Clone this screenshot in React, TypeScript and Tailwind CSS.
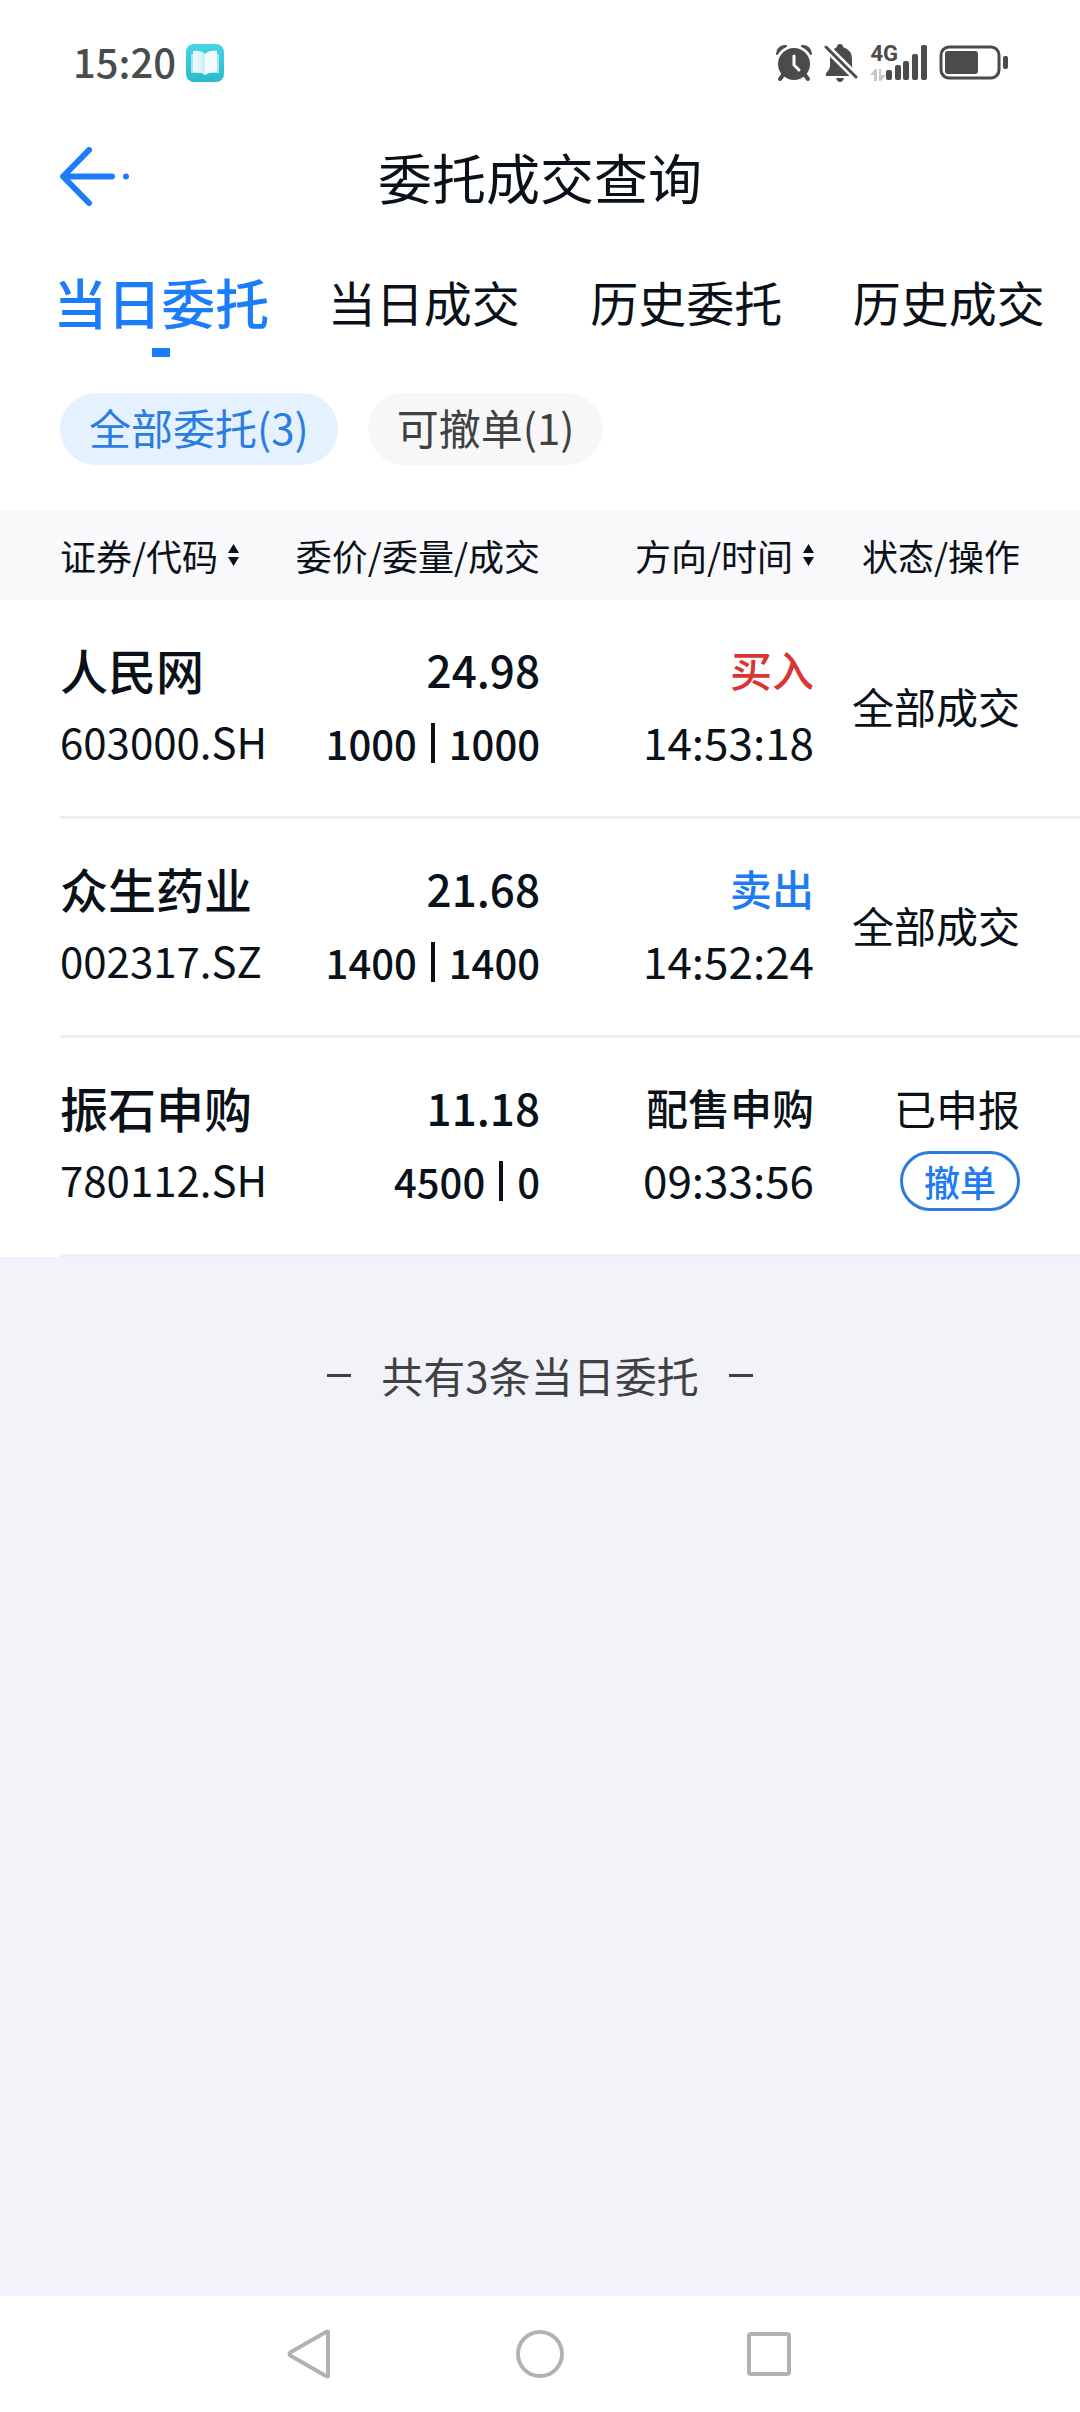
import React, { useState } from "react";

type Order = {
  name: string;
  code: string;
  price: string;
  amount: string;
  filled: string;
  side: string;
  sideClass: string;
  time: string;
  status: string;
  cancellable: boolean;
};

const orders: Order[] = [
  { name: "人民网", code: "603000.SH", price: "24.98", amount: "1000", filled: "1000", side: "买入", sideClass: "text-[#d93532]", time: "14:53:18", status: "全部成交", cancellable: false },
  { name: "众生药业", code: "002317.SZ", price: "21.68", amount: "1400", filled: "1400", side: "卖出", sideClass: "text-[#1f7cf0]", time: "14:52:24", status: "全部成交", cancellable: false },
  { name: "振石申购", code: "780112.SH", price: "11.18", amount: "4500", filled: "0", side: "配售申购", sideClass: "text-[#0a1118]", time: "09:33:56", status: "已申报", cancellable: true },
];

const tabs = ["当日委托", "当日成交", "历史委托", "历史成交"];
const filters = ["全部委托(3)", "可撤单(1)"];

function StatusBar() {
  return (
    <div className="flex h-[126px] items-center justify-between pl-[73px] pr-[72px] text-[#4b4b4b]">
      <div className="flex items-center gap-[10px]">
        <span className="pb-1 text-[40px] leading-[48px] font-medium">15:20</span>
        <svg width="38" height="38" viewBox="0 0 38 38" aria-hidden="true">
          <defs>
            <linearGradient id="tile" x1="0" y1="0" x2="0" y2="1">
              <stop offset="0" stopColor="#45d6e6" />
              <stop offset="1" stopColor="#2bb9cc" />
            </linearGradient>
            <linearGradient id="page" x1="0" y1="0" x2="1" y2="0">
              <stop offset="0" stopColor="#f4fdff" />
              <stop offset="1" stopColor="#c9edf7" />
            </linearGradient>
          </defs>
          <rect width="38" height="38" rx="8" fill="url(#tile)" />
          <path d="M5 10h28v19H21l-2 2-2-2H5z" fill="#a5e6f0" />
          <path d="M7 7q8-1 12 3v21q-4-3-12-3z" fill="url(#page)" />
          <path d="M31 7q-8-1-12 3v21q4-3 12-3z" fill="#f4fcff" />
        </svg>
      </div>
      <div className="flex items-center gap-3">
        <svg width="36" height="38" viewBox="0 0 36 38" aria-hidden="true" fill="currentColor">
          <path d="M1 10A8 8 0 0 1 10 2Q4 5 1 10zM35 10A8 8 0 0 0 26 2Q32 5 35 10z" stroke="currentColor" strokeWidth="2" strokeLinejoin="round" />
          <circle cx="18" cy="20" r="16" />
          <path d="M7 31l-3 4M29 31l3 4" stroke="currentColor" strokeWidth="4" strokeLinecap="round" />
          <path d="M18 12v9l5 5" fill="none" stroke="#fff" strokeWidth="3" strokeLinecap="round" />
        </svg>
        <svg width="34" height="38" viewBox="0 0 34 38" aria-hidden="true" fill="currentColor">
          <path d="M16 0q3 0 3 3 9 3 9 12v7q0 3 3 7l2 3H2q-1-2 1-4 3-3 3-6v-7Q6 6 13 3q0-3 3-3z" />
          <path d="M12 34h8q-1 4-4 4t-4-4z" />
          <path d="M2 3L33 34" stroke="#fff" strokeWidth="8" />
          <path d="M2 3L32 33" stroke="currentColor" strokeWidth="3" strokeLinecap="round" />
        </svg>
        <div className="flex items-end">
          <div className="flex h-[36px] flex-col items-start justify-between">
            <span className="font-['Roboto',sans-serif] text-[22px] leading-[18px] font-bold">4G</span>
            <svg width="16" height="12" viewBox="0 0 16 12" aria-hidden="true" fill="#c8c8c8">
              <path d="M0 6l5-6h2v12H4V6zM16 6l-5 6H9V0h2v6z" />
            </svg>
          </div>
          <svg className="-ml-3" width="41" height="36" viewBox="0 0 41 36" aria-hidden="true" fill="currentColor">
            <rect x="0" y="25" width="6" height="10" rx="2" />
            <rect x="9" y="20" width="6" height="15" rx="2" />
            <rect x="17" y="16" width="6" height="19" rx="2" />
            <rect x="26" y="9" width="6" height="26" rx="2" />
            <rect x="35" y="0" width="6" height="35" rx="2" />
          </svg>
        </div>
        <svg width="69" height="36" viewBox="0 0 69 36" aria-hidden="true">
          <rect x="2" y="2" width="58" height="31" rx="8" fill="none" stroke="currentColor" strokeWidth="3" />
          <rect x="6" y="6" width="33" height="23" rx="3" fill="currentColor" />
          <rect x="64" y="11" width="5" height="13" rx="2" fill="currentColor" />
        </svg>
      </div>
    </div>
  );
}

function SortIcon() {
  return (
    <svg width="11" height="22" viewBox="0 0 11 22" aria-hidden="true" fill="#0a1118">
      <path d="M5.500 0L11 9H0zM5.500 22L11 13H0z" />
    </svg>
  );
}

function OrderRow({ order }: { order: Order }) {
  const cell = "h-[219px] border-b-[3px] border-[#efeff0] pt-[33px] leading-[72px] whitespace-nowrap";
  return (
    <tr>
      <td className="p-0 pl-[60px]">
        <div className={cell}>
          <div className="text-[48px] font-medium">{order.name}</div>
          <div className="text-[42px]">{order.code}</div>
        </div>
      </td>
      <td className="p-0 text-right font-medium">
        <div className={cell}>
          <div className="text-[44px]">{order.price}</div>
          <div className="flex items-center justify-end gap-[14px] pt-[2px] text-[40px]">
            <span>{order.amount}</span>
            <span className="h-10 border-l-4 border-[#0a1118]" />
            <span>{order.filled}</span>
          </div>
        </div>
      </td>
      <td className="p-0 text-right">
        <div className={cell}>
          <div className={`text-[42px] font-medium ${order.sideClass}`}>{order.side}</div>
          <div className="text-[44px]">{order.time}</div>
        </div>
      </td>
      <td className="p-0 text-right text-[42px]">
        <div className="flex h-[219px] flex-col items-end justify-center border-b-[3px] border-[#efeff0] pr-[60px] pb-1 leading-[72px] whitespace-nowrap">
          <span>{order.status}</span>
          {order.cancellable && (
            <span className="flex h-[72px] items-center pt-[2px]">
              <button type="button" className="h-[60px] w-[120px] rounded-full border-[3px] border-[#2f7bdc] text-[36px] leading-[52px] font-medium text-[#1f7cf0]">
                撤单
              </button>
            </span>
          )}
        </div>
      </td>
    </tr>
  );
}

export default function App() {
  const [tab, setTab] = useState(0);
  const [filter, setFilter] = useState(0);

  return (
    <div className="flex min-h-screen flex-col bg-[#f2f3f8] font-['Noto_Sans_CJK_SC',sans-serif] text-[#0a1118]">
      <header className="bg-white">
        <StatusBar />
        <div className="grid h-[102px] grid-cols-[1fr_auto_1fr] items-center px-[60px]">
          <button type="button" aria-label="返回" className="w-[72px]">
            <svg width="72" height="60" viewBox="0 0 72 60" fill="none" stroke="#1c7dfa" strokeWidth="6" strokeLinecap="round" strokeLinejoin="round" aria-hidden="true">
              <path d="M29 3L3 29.500L29 56M4 29.500H52" />
              <circle cx="66" cy="29.500" r="3" fill="#1c7dfa" stroke="none" />
            </svg>
          </button>
          <h1 className="text-[54px] leading-[72px]">委托成交查询</h1>
        </div>
        <nav className="grid grid-cols-4 pl-[30px]">
          {tabs.map((label, i) => (
            <button
              key={label}
              type="button"
              onClick={() => setTab(i)}
              className={
                i === tab
                  ? "relative h-[150px] pb-1 text-[54px] font-medium whitespace-nowrap text-[#1c7dfa]"
                  : "relative h-[150px] pb-1 text-[48px] whitespace-nowrap"
              }
            >
              {label}
              {i === tab && <span className="absolute bottom-[21px] left-1/2 h-[9px] w-[18px] -translate-x-1/2 bg-[#1c7dfa]" />}
            </button>
          ))}
        </nav>
        <div className="flex gap-[30px] px-[60px] pt-[15px] pb-[45px]">
          {filters.map((label, i) => (
            <button
              key={label}
              type="button"
              onClick={() => setFilter(i)}
              className={
                i === filter
                  ? "h-[72px] rounded-full bg-[#e5f1fe] px-[29px] pb-1 text-[42px] leading-[68px] text-[#2a7de1]"
                  : "h-[72px] rounded-full bg-[#f7f7f7] px-[29px] pb-1 text-[42px] leading-[68px] text-[#404143]"
              }
            >
              {label}
            </button>
          ))}
        </div>
      </header>

      <main className="flex-1">
        <table className="w-full table-fixed border-separate border-spacing-0 bg-white">
          <thead>
            <tr className="h-[90px] bg-[#f9f9fb] text-[36px] whitespace-nowrap">
              <th scope="col" className="w-1/4 p-0 pl-[60px] font-normal">
                <button type="button" className="flex items-center gap-[10px]">
                  证券/代码
                  <SortIcon />
                </button>
              </th>
              <th scope="col" className="w-1/4 p-0 text-right font-normal">委价/委量/成交</th>
              <th scope="col" className="w-[274px] p-0 font-normal">
                <button type="button" className="ml-auto flex items-center gap-[10px]">
                  方向/时间
                  <SortIcon />
                </button>
              </th>
              <th scope="col" className="p-0 pr-[60px] text-right font-normal">状态/操作</th>
            </tr>
          </thead>
          <tbody>
            {orders.map((order) => (
              <OrderRow key={order.code} order={order} />
            ))}
          </tbody>
        </table>
        <div className="flex items-center justify-center gap-[30px] pt-[82px] text-[42px] leading-[72px] text-[#404143]">
          <span className="h-[3px] w-6 bg-[#404143]" />
          <p>共有3条当日委托</p>
          <span className="h-[3px] w-6 bg-[#404143]" />
        </div>
      </main>

      <footer className="flex h-[116px] items-center justify-center gap-[180px] bg-white">
        <button type="button" aria-label="后退">
          <svg width="50" height="50" viewBox="0 0 50 50" fill="none" stroke="#b2b2b2" strokeWidth="4" strokeLinejoin="round" aria-hidden="true">
            <path d="M43 3V47Q43 48 41 47L6 27Q3 25 6 23L41 3Q43 2 43 3z" />
          </svg>
        </button>
        <button type="button" aria-label="主页">
          <svg width="50" height="50" viewBox="0 0 50 50" fill="none" stroke="#b2b2b2" strokeWidth="4" aria-hidden="true">
            <circle cx="25" cy="25" r="22" />
          </svg>
        </button>
        <button type="button" aria-label="最近任务">
          <svg width="50" height="50" viewBox="0 0 50 50" fill="none" stroke="#b2b2b2" strokeWidth="4" aria-hidden="true">
            <rect x="4" y="5" width="40" height="40" rx="2" />
          </svg>
        </button>
      </footer>
    </div>
  );
}
